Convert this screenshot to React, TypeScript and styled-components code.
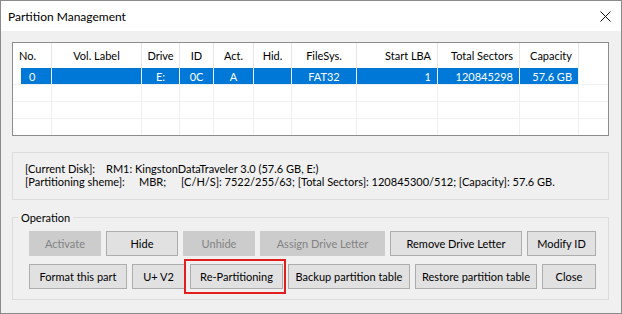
import React from "react"
import styled, { createGlobalStyle } from "styled-components"

const GlobalStyle = createGlobalStyle`
  html, body {
    margin: 0;
    padding: 0;
    background: #f0f0f0;
  }
  body {
    font-family: "Segoe UI", Lato, "Noto Sans", sans-serif;
    font-size: 11px;
    color: #000;
  }
  * {
    box-sizing: border-box;
  }
`

const Window = styled.div`
  width: 622px;
  height: 314px;
  border: 1px solid #8a8a8a;
  background: #f0f0f0;
  display: flex;
  flex-direction: column;
`

const TitleBar = styled.div`
  height: 30px;
  background: #fff;
  display: flex;
  align-items: center;
  justify-content: space-between;
  padding: 0 10px 0 7px;
  font-size: 12px;
`

const Body = styled.div`
  flex: 1;
  display: flex;
  flex-direction: column;
  padding: 11px 12px 0 11px;
`

const ListBox = styled.div`
  height: 94px;
  border: 1px solid #8c8c8c;
  background: #fff;
  overflow: hidden;
`

const COLS = "39px 90px 38px 34px 40px 38px 65px 81px 82px 59px 1fr"

const HeaderRow = styled.div`
  display: grid;
  grid-template-columns: ${COLS};
  height: 25px;
`

const HeaderCell = styled.div<{ $align?: string }>`
  display: flex;
  align-items: center;
  justify-content: ${(p) => p.$align || "center"};
  padding: 0 6px;
  border-right: 1px solid #e5e5e5;
  white-space: nowrap;
  &:last-child {
    border-right: none;
  }
`

const DataRow = styled.div`
  display: grid;
  grid-template-columns: ${COLS};
  height: 17px;
  border-bottom: 1px solid #f0f0f0;
`

const DataCell = styled.div<{ $align?: string; $selected?: boolean; $indent?: boolean }>`
  display: flex;
  align-items: center;
  justify-content: ${(p) => p.$align || "center"};
  padding: 0 6px;
  white-space: nowrap;
  border-right: 1px solid #f0f0f0;
  background: ${(p) => (p.$selected ? "#0078d7" : "transparent")};
  color: ${(p) => (p.$selected ? "#fff" : "#000")};
  margin-left: ${(p) => (p.$indent ? "8px" : "0")};
  padding-left: ${(p) => (p.$indent ? "8px" : "6px")};
  &:last-child {
    border-right: none;
    background: transparent;
  }
`

const InfoBox = styled.div`
  margin-top: 16px;
  height: 48px;
  border: 1px solid #dcdcdc;
  padding: 9px 0 0 12px;
  display: flex;
  flex-direction: column;
`

const InfoLine = styled.div`
  display: flex;
  height: 13px;
  line-height: 13px;
  white-space: nowrap;
`

const InfoPart = styled.span<{ $w?: number }>`
  display: inline-block;
  flex: none;
  width: ${(p) => (p.$w ? `${p.$w}px` : "auto")};
`

const Group = styled.fieldset`
  margin: 10px 0 0 0;
  padding: 6px 0 9px 16px;
  border: 1px solid #dcdcdc;
  display: flex;
  flex-direction: column;
  gap: 8px;
  height: 90px;
`

const Legend = styled.legend`
  margin-left: -11px;
  padding: 0 3px;
  line-height: 15px;
`

const ButtonRow = styled.div`
  display: flex;
  gap: 5px;
`

const Btn = styled.button<{ $w: number }>`
  position: relative;
  flex: none;
  width: ${(p) => p.$w}px;
  height: 25px;
  padding: 0;
  font-family: inherit;
  font-size: 11px;
  color: #000;
  background: #e1e1e1;
  border: 1px solid #adadad;
  &:disabled {
    background: #cccccc;
    border-color: #cccccc;
    color: #838383;
  }
`

const Highlight = styled.span`
  position: absolute;
  left: -7px;
  right: -4px;
  top: -6px;
  bottom: -6px;
  border: 2px solid #e21f1f;
  pointer-events: none;
`

const CloseIcon = () => (
  <svg width="11" height="11" viewBox="0 0 11 11">
    <path d="M0.5 0.5 L10.5 10.5 M10.5 0.5 L0.5 10.5" stroke="#111" strokeWidth="1" />
  </svg>
)

const headers: [string, string?][] = [
  ["No.", "flex-start"],
  ["Vol. Label"],
  ["Drive"],
  ["ID"],
  ["Act."],
  ["Hid."],
  ["FileSys."],
  ["Start LBA", "flex-end"],
  ["Total Sectors", "flex-end"],
  ["Capacity", "flex-end"],
  [""],
]

const row: [string, string?][] = [
  ["0", "flex-start"],
  [""],
  ["E:"],
  ["0C"],
  ["A"],
  [""],
  ["FAT32"],
  ["1", "flex-end"],
  ["120845298", "flex-end"],
  ["57.6 GB", "flex-end"],
  [""],
]

export default function App() {
  return (
    <>
      <GlobalStyle />
      <Window>
        <TitleBar>
          <span>Partition Management</span>
          <CloseIcon />
        </TitleBar>
        <Body>
          <ListBox>
            <HeaderRow>
              {headers.map(([t, a], i) => (
                <HeaderCell key={i} $align={a}>
                  {t}
                </HeaderCell>
              ))}
            </HeaderRow>
            <DataRow>
              {row.map(([t, a], i) => (
                <DataCell key={i} $align={a} $selected $indent={i === 0}>
                  {t}
                </DataCell>
              ))}
            </DataRow>
            {[0, 1, 2].map((r) => (
              <DataRow key={r}>
                {row.map((_, i) => (
                  <DataCell key={i} />
                ))}
              </DataRow>
            ))}
          </ListBox>

          <InfoBox>
            <InfoLine>
              <InfoPart $w={81}>[Current Disk]:</InfoPart>
              <InfoPart>RM1: KingstonDataTraveler 3.0 (57.6 GB, E:)</InfoPart>
            </InfoLine>
            <InfoLine>
              <InfoPart $w={114}>[Partitioning sheme]:</InfoPart>
              <InfoPart $w={42}>MBR;</InfoPart>
              <InfoPart>
                [C/H/S]: 7522/255/63; [Total Sectors]: 120845300/512; [Capacity]: 57.6 GB.
              </InfoPart>
            </InfoLine>
          </InfoBox>

          <Group>
            <Legend>Operation</Legend>
            <ButtonRow>
              <Btn $w={72} disabled>Activate</Btn>
              <Btn $w={72}>Hide</Btn>
              <Btn $w={72} disabled>Unhide</Btn>
              <Btn $w={125} disabled>Assign Drive Letter</Btn>
              <Btn $w={132}>Remove Drive Letter</Btn>
              <Btn $w={69}>Modify ID</Btn>
            </ButtonRow>
            <ButtonRow>
              <Btn $w={98}>Format this part</Btn>
              <Btn $w={53}>U+ V2</Btn>
              <Btn $w={93}>
                Re-Partitioning
                <Highlight />
              </Btn>
              <Btn $w={122}>Backup partition table</Btn>
              <Btn $w={122}>Restore partition table</Btn>
              <Btn $w={54}>Close</Btn>
            </ButtonRow>
          </Group>
        </Body>
      </Window>
    </>
  )
}
